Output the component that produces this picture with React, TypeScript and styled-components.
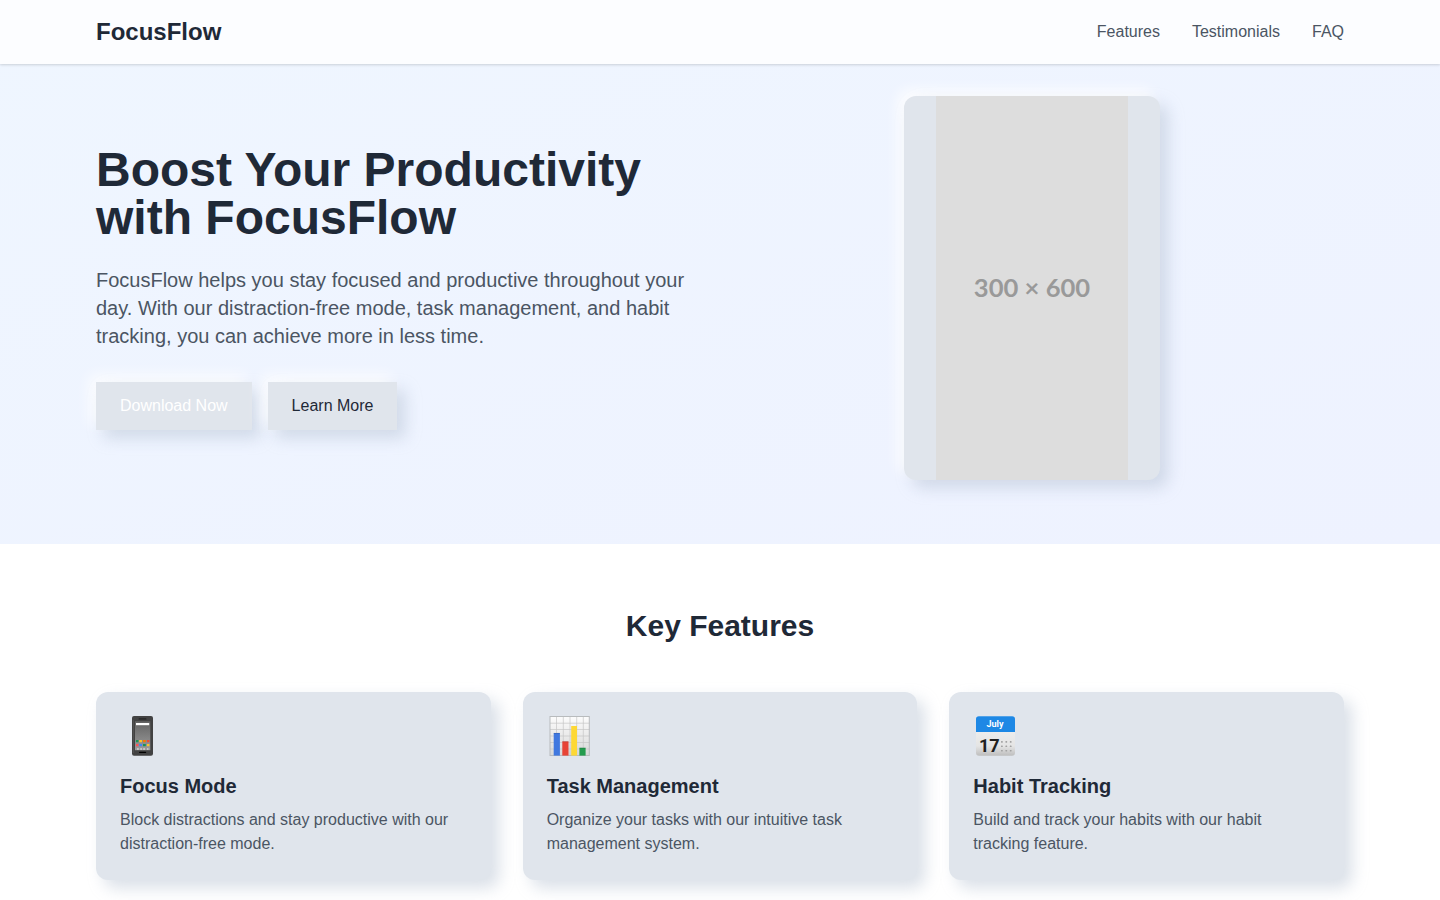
import React from "react";
import styled, { createGlobalStyle } from "styled-components";

const GlobalStyle = createGlobalStyle`
  *, *::before, *::after { box-sizing: border-box; }
  html, body { margin: 0; padding: 0; }
  body {
    font-family: "Liberation Sans", Arial, sans-serif;
    font-size: 16px;
    line-height: 24px;
    color: #1f2937;
    background: #fff;
    height: 900px;
    overflow: hidden;
  }
  h1, h2, h3, p { margin: 0; }
`;

const softShadow = "8px 8px 16px rgba(163, 177, 198, 0.4), -6px -6px 14px rgba(255, 255, 255, 0.9)";

const Header = styled.header`
  position: relative;
  height: 64px;
  padding: 0 96px;
  display: flex;
  align-items: center;
  justify-content: space-between;
  background: #fcfdff;
  box-shadow: 0 1px 3px rgba(0, 0, 0, 0.1), 0 1px 2px rgba(0, 0, 0, 0.06);
`;
const Logo = styled.div`
  font-size: 24px;
  line-height: 32px;
  font-weight: 700;
`;
const Nav = styled.nav`
  display: flex;
  gap: 32px;
`;
const NavLink = styled.a`
  color: #4b5563;
`;
const Top = styled.div`
  background: linear-gradient(to bottom right, #eff6ff, #eef2ff);
`;
const Hero = styled.section`
  height: 480px;
  padding: 32px 96px 64px;
  display: grid;
  grid-template-columns: 1fr 1fr;
  align-items: center;
`;
const Title = styled.h1`
  font-size: 48px;
  line-height: 48px;
  margin-bottom: 24px;
`;
const Lead = styled.p`
  font-size: 20px;
  line-height: 28px;
  color: #4b5563;
  margin-bottom: 32px;
`;
const Buttons = styled.div`
  display: flex;
  gap: 16px;
`;
const Button = styled.button<{ $light?: boolean }>`
  font: inherit;
  border: 0;
  padding: 12px 24px;
  background: #e0e5ec;
  color: ${(p) => (p.$light ? "#fff" : "#1f2937")};
  box-shadow: ${softShadow};
`;
const Phone = styled.div`
  justify-self: center;
  width: 256px;
  height: 384px;
  border-radius: 12px;
  overflow: hidden;
  padding: 0 32px;
  background: #e0e5ec;
  box-shadow: ${softShadow};
`;
const Placeholder = styled.div`
  height: 100%;
  padding-bottom: 2px;
  display: flex;
  align-items: center;
  justify-content: center;
  background: #ddd;
  color: #999;
  font: 700 25.6px Lato, sans-serif;
`;
const Features = styled.section`
  padding: 64px 96px;
`;
const SectionTitle = styled.h2`
  font-size: 30px;
  line-height: 36px;
  text-align: center;
  margin-bottom: 48px;
`;
const Cards = styled.div`
  display: grid;
  grid-template-columns: repeat(3, 1fr);
  gap: 32px;
`;
const Card = styled.article`
  height: 188px;
  padding: 24px;
  border-radius: 12px;
  background: #e0e5ec;
  box-shadow: ${softShadow};
`;
const Icon = styled.svg`
  display: block;
  width: 45px;
  height: 40px;
  margin-bottom: 16px;
  overflow: visible;
`;
const CardTitle = styled.h3`
  font-size: 20px;
  line-height: 28px;
  margin-bottom: 8px;
`;
const CardText = styled.p`
  color: #4b5563;
`;

const PhoneIcon = () => (
  <Icon viewBox="0 0 45 40">
    <defs>
      <linearGradient id="screen" x1="0" y1="0" x2="0" y2="1">
        <stop offset="0" stopColor="#626262" />
        <stop offset="1" stopColor="#9c9c9c" />
      </linearGradient>
    </defs>
    <rect x="12" y="0" width="21" height="39.7" rx="2" fill="#424242" />
    <rect x="12.8" y="4" width="1" height="33" fill="#555" />
    <rect x="18.5" y="2" width="8" height="1.8" rx=".9" fill="#2c2c2c" />
    <rect x="15" y="5.2" width="15.3" height="29" fill="url(#screen)" />
    <rect x="16" y="7" width="13.2" height="2.2" fill="#fff" />
    <g>
      <rect x="16" y="24" width="2.4" height="2.2" fill="#179456" />
      <rect x="19.2" y="24" width="2.8" height="2.2" fill="#fbc22d" />
      <rect x="23" y="24" width="2.8" height="2.2" fill="#f57c00" />
      <rect x="27" y="24" width="2.4" height="2.2" fill="#ee4b3c" />
      <rect x="16" y="28" width="2.4" height="2.2" fill="#ff5252" />
      <rect x="19.2" y="28" width="2.8" height="2.2" fill="#4285f4" />
      <rect x="23" y="28" width="2.8" height="2.2" fill="#179456" />
      <rect x="27" y="28" width="2.4" height="2.2" fill="#fbc22d" />
      <path d="M17 32h1.8v2H17zM20.2 32H22v2h-1.8zM23.2 32H25v2h-1.8zM27 32h1.5v2H27z" fill="#c4c4c4" />
    </g>
    <rect x="19" y="35.7" width="7.2" height="1.2" rx=".6" fill="#000" />
  </Icon>
);

const ChartIcon = () => (
  <Icon viewBox="0 0 45 40">
    <defs>
      <linearGradient id="paper" x1="0" y1="0" x2="0" y2="1">
        <stop offset="0" stopColor="#fcfcfc" />
        <stop offset="1" stopColor="#d8d8d8" />
      </linearGradient>
    </defs>
    <rect x="3" y=".5" width="39.5" height="39" fill="url(#paper)" />
    <path d="M9.5 .5v39M16.3 .5v39M23 .5v39M29.7 .5v39M36.3 .5v39M3 7.2h39.5M3 13.5h39.5M3 20h39.5M3 26.5h39.5M3 33h39.5" stroke="#c6c6c6" strokeWidth=".7" fill="none" />
    <rect x="3" y=".5" width="39.3" height="39" fill="none" stroke="#b8bbbd" strokeWidth="1" />
    <rect x="6.7" y="17" width="6.2" height="22.6" fill="#4078df" />
    <rect x="15.3" y="25.4" width="6.2" height="14.2" fill="#e74335" />
    <rect x="24.2" y="10" width="5.8" height="29.6" fill="#fdd835" />
    <rect x="32.4" y="31.8" width="6.2" height="7.8" fill="#249c4e" />
    <path d="M6.7 17.3h6.2M15.3 25.7h6.2M32.4 32.1h6.2" stroke="#000" strokeOpacity=".2" strokeWidth=".7" />
  </Icon>
);

const CalendarLabel = styled.text`
  font-family: Roboto, sans-serif;
  font-weight: 700;
  text-anchor: middle;
`;

const CalendarIcon = () => (
  <Icon viewBox="0 0 45 40">
    <defs>
      <linearGradient id="page" x1="0" y1="0" x2="0" y2="1">
        <stop offset="0" stopColor="#f5f5f5" />
        <stop offset=".75" stopColor="#e5e5e5" />
        <stop offset="1" stopColor="#bdbdbd" />
      </linearGradient>
    </defs>
    <rect x="3" y=".3" width="39" height="39.5" rx="3" fill="url(#page)" />
    <path d="M3 16V3.1a2.8 2.8 0 0 1 2.8-2.8h33.4A2.8 2.8 0 0 1 42 3.1V16z" fill="#1e88e5" />
    <CalendarLabel x="22" y="11" fontSize="9" fill="#fff">July</CalendarLabel>
    <CalendarLabel x="16.3" y="35.6" fontSize="18" fill="#212121">17</CalendarLabel>
    <g fill="#a2a2a2">
      {[25.3, 29.7, 34.1].map((y) =>
        [28, 32.4, 36.8].map((x) => <rect key={`${x}-${y}`} x={x} y={y - 0.2} width="1.8" height="1.6" rx=".4" />)
      )}
    </g>
  </Icon>
);

const features = [
  { icon: <PhoneIcon />, title: "Focus Mode", text: "Block distractions and stay productive with our distraction-free mode." },
  { icon: <ChartIcon />, title: "Task Management", text: "Organize your tasks with our intuitive task management system." },
  { icon: <CalendarIcon />, title: "Habit Tracking", text: "Build and track your habits with our habit tracking feature." },
];

export default function App() {
  return (
    <>
      <GlobalStyle />
      <Top>
        <Header>
          <Logo>FocusFlow</Logo>
          <Nav>
            <NavLink>Features</NavLink>
            <NavLink>Testimonials</NavLink>
            <NavLink>FAQ</NavLink>
          </Nav>
        </Header>
        <Hero>
          <div>
            <Title>Boost Your Productivity<br />with FocusFlow</Title>
            <Lead>FocusFlow helps you stay focused and productive throughout your day. With our distraction-free mode, task management, and habit tracking, you can achieve more in less time.</Lead>
            <Buttons>
              <Button $light>Download Now</Button>
              <Button>Learn More</Button>
            </Buttons>
          </div>
          <Phone>
            <Placeholder>300 × 600</Placeholder>
          </Phone>
        </Hero>
      </Top>
      <Features>
        <SectionTitle>Key Features</SectionTitle>
        <Cards>
          {features.map((f) => (
            <Card key={f.title}>
              {f.icon}
              <CardTitle>{f.title}</CardTitle>
              <CardText>{f.text}</CardText>
            </Card>
          ))}
        </Cards>
      </Features>
    </>
  );
}
